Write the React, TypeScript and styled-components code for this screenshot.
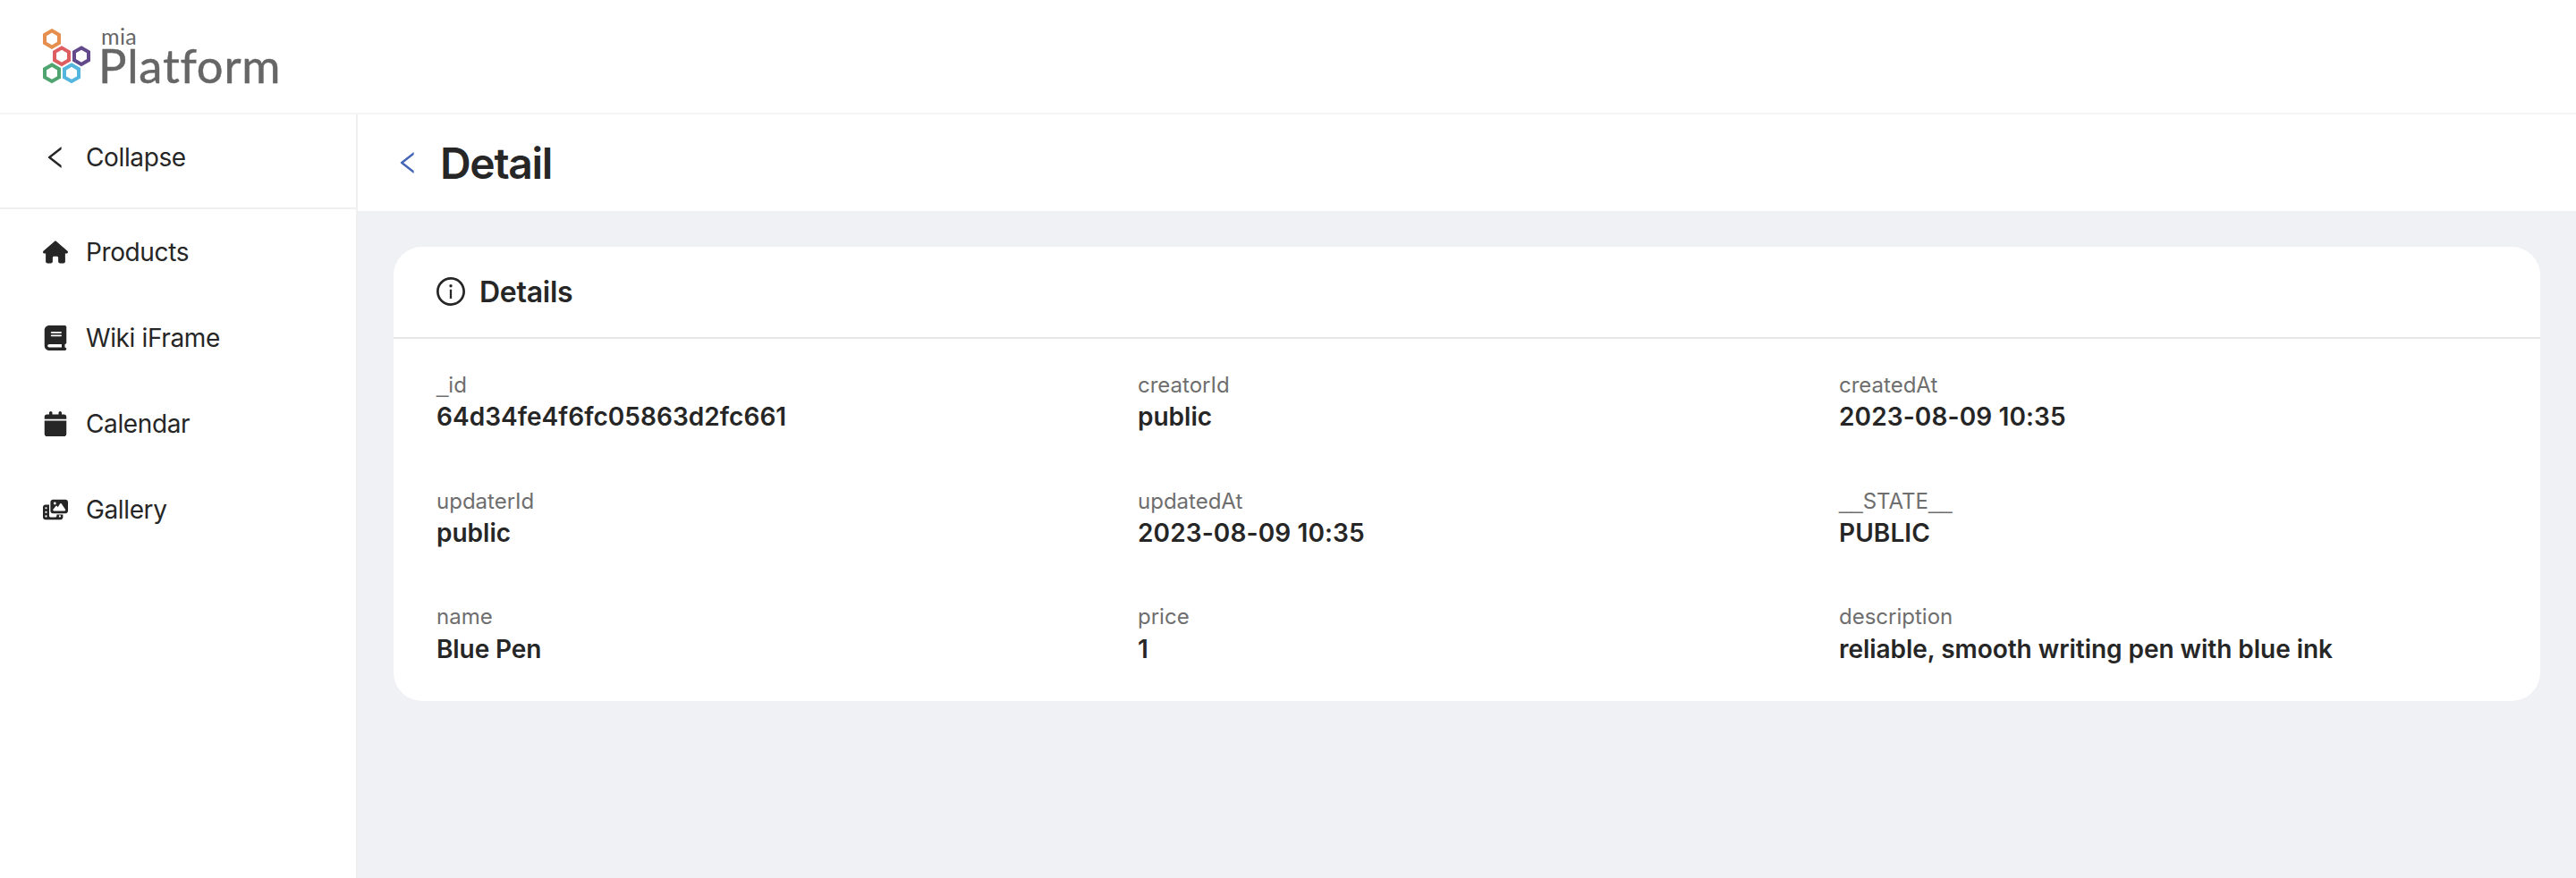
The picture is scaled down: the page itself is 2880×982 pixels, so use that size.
import React from 'react';
import styled, { createGlobalStyle } from 'styled-components';
import { FaBook, FaCalendar, FaHouse, FaPhotoFilm } from 'react-icons/fa6';

const GlobalStyle = createGlobalStyle`
  *, *::before, *::after { box-sizing: border-box; }
  body {
    margin: 0;
    background: #f0f1f5;
    color: #262626;
    font-family: Inter, "Liberation Sans", sans-serif;
    font-size: 28px;
  }
`;

const Page = styled.div`
  display: flex;
  flex-direction: column;
  min-height: 100vh;
`;

const TopBar = styled.header`
  display: flex;
  align-items: center;
  height: 128px;
  padding: 0 48px;
  background: #fff;
  border-bottom: 2px solid #f4f4f4;
`;

const LogoLink = styled.a`
  display: flex;
  gap: 8px;
  height: 66px;
`;

const Wordmark = styled.div`
  display: flex;
  flex-direction: column;
  color: #666;
  font-family: Lato, sans-serif;
`;

const BrandPrefix = styled.span`
  padding-left: 3px;
  font-size: 25px;
  line-height: 20px;
  letter-spacing: 0.4px;
`;

const BrandName = styled.span`
  font-size: 52.5px;
  line-height: 46px;
  letter-spacing: 0.8px;
  -webkit-text-stroke: 0.5px #666;
`;

const Body = styled.div`
  display: flex;
  flex: 1;
`;

const Sidebar = styled.aside`
  width: 400px;
  flex: none;
  background: #fff;
  border-right: 2px solid #f0f0f0;
`;

const CollapseBar = styled.div`
  height: 106px;
  border-bottom: 2px solid #f0f0f0;
`;

const NavList = styled.nav`
  display: flex;
  flex-direction: column;
`;

const NavItem = styled.a`
  display: flex;
  align-items: center;
  gap: 20px;
  height: 96px;
  padding-left: 48px;
  letter-spacing: -0.38px;
  line-height: 44px;

  svg { flex: none; }
`;

const Content = styled.main`
  flex: 1;
  min-width: 0;
`;

const TitleBar = styled.div`
  display: flex;
  align-items: center;
  gap: 22px;
  height: 108px;
  padding-left: 42px;
  background: #fff;
  color: #4566b5;
`;

const Title = styled.h1`
  margin: 0;
  padding-top: 2px;
  color: #262626;
  font-size: 48px;
  font-weight: 600;
  line-height: 60px;
  letter-spacing: -1.33px;
`;

const Card = styled.section`
  margin: 40px;
  background: #fff;
  border-radius: 32px;
`;

const CardHeader = styled.div`
  display: flex;
  align-items: center;
  gap: 16px;
  height: 103px;
  padding: 0 48px 1px;
  border-bottom: 2px solid #e6e6e6;
`;

const CardTitle = styled.h2`
  margin: 0;
  padding-top: 2px;
  font-size: 32px;
  font-weight: 600;
  line-height: 44px;
  letter-spacing: -0.27px;
`;

const Fields = styled.dl`
  display: grid;
  grid-template-columns: repeat(3, 1fr);
  gap: 57.55px 48px;
  margin: 0;
  padding: 33.3px 48px 40.6px;
`;

const Field = styled.div`
  height: 72px;
`;

const Label = styled.dt`
  padding-top: 1px;
  color: #6e6e6e;
  font-size: 24px;
  line-height: 36px;
`;

const Underscores = styled.span`
  font-family: "Liberation Sans", sans-serif;
  line-height: 1;
`;

const Value = styled.dd<{ $tracking?: number }>`
  margin: 0.17px 0 0;
  font-weight: 600;
  line-height: 35px;
  letter-spacing: ${({ $tracking = 0 }) => $tracking}px;
`;

const hexagons = [
  { x: 10, y: 13.5, color: '#e68e4d' },
  { x: 21, y: 32.7, color: '#de5d61' },
  { x: 43, y: 32.7, color: '#61498b' },
  { x: 10, y: 51.8, color: '#4fa470' },
  { x: 32, y: 51.8, color: '#54b6de' },
];

const Logo = () => (
  <LogoLink>
    <svg width="54" height="66" viewBox="0 0 54 66">
      {hexagons.map(({ x, y, color }) => (
        <polygon
          key={color}
          points="0,-9.2 8,-4.6 8,4.6 0,9.2 -8,4.6 -8,-4.6"
          transform={`translate(${x} ${y})`}
          fill="none"
          stroke={color}
          strokeWidth="4"
        />
      ))}
    </svg>
    <Wordmark>
      <BrandPrefix>mia</BrandPrefix>
      <BrandName>Platform</BrandName>
    </Wordmark>
  </LogoLink>
);

const ChevronLeft = () => (
  <svg width="28" height="28" viewBox="64 64 896 896" fill="currentColor">
    <path d="M724 218.3V141c0-6.7-7.7-10.4-12.9-6.3L260.3 486.8a31.86 31.86 0 000 50.3l450.8 352.1c5.3 4.1 12.9.4 12.9-6.3v-77.3c0-4.9-2.3-9.6-6.1-12.6l-360-281 360-281.1c3.8-3 6.1-7.7 6.1-12.6z" />
  </svg>
);

const InfoCircle = () => (
  <svg width="32" height="32" viewBox="64 64 896 896" fill="currentColor">
    <path d="M512 64C264.6 64 64 264.6 64 512s200.6 448 448 448 448-200.6 448-448S759.4 64 512 64zm0 820c-205.4 0-372-166.6-372-372s166.6-372 372-372 372 166.6 372 372-166.6 372-372 372z" />
    <path d="M464 336a48 48 0 1096 0 48 48 0 10-96 0zm72 112h-48c-4.4 0-8 3.6-8 8v272c0 4.4 3.6 8 8 8h48c4.4 0 8-3.6 8-8V456c0-4.4-3.6-8-8-8z" />
  </svg>
);

const navItems = [
  { label: 'Products', Icon: FaHouse },
  { label: 'Wiki iFrame', Icon: FaBook },
  { label: 'Calendar', Icon: FaCalendar },
  { label: 'Gallery', Icon: FaPhotoFilm },
];

type FieldData = { label: string; value: string; tracking?: number };

const fields: FieldData[] = [
  { label: '_id', value: '64d34fe4f6fc05863d2fc661', tracking: 0.05 },
  { label: 'creatorId', value: 'public' },
  { label: 'createdAt', value: '2023-08-09 10:35', tracking: 0.13 },
  { label: 'updaterId', value: 'public' },
  { label: 'updatedAt', value: '2023-08-09 10:35', tracking: 0.13 },
  { label: '__STATE__', value: 'PUBLIC', tracking: 0.1 },
  { label: 'name', value: 'Blue Pen', tracking: -0.1 },
  { label: 'price', value: '1' },
  { label: 'description', value: 'reliable, smooth writing pen with blue ink', tracking: -0.04 },
];

const FieldLabel = ({ text }: { text: string }) => (
  <Label>
    {text
      .split(/(_+)/)
      .filter(Boolean)
      .map((part, i) => (part.startsWith('_') ? <Underscores key={i}>{part}</Underscores> : part))}
  </Label>
);

export default function App() {
  return (
    <Page>
      <GlobalStyle />
      <TopBar>
        <Logo />
      </TopBar>
      <Body>
        <Sidebar>
          <CollapseBar>
            <NavItem>
              <ChevronLeft />
              Collapse
            </NavItem>
          </CollapseBar>
          <NavList>
            {navItems.map(({ label, Icon }) => (
              <NavItem key={label}>
                <Icon size={28} />
                {label}
              </NavItem>
            ))}
          </NavList>
        </Sidebar>
        <Content>
          <TitleBar>
            <ChevronLeft />
            <Title>Detail</Title>
          </TitleBar>
          <Card>
            <CardHeader>
              <InfoCircle />
              <CardTitle>Details</CardTitle>
            </CardHeader>
            <Fields>
              {fields.map(({ label, value, tracking }) => (
                <Field key={label}>
                  <FieldLabel text={label} />
                  <Value $tracking={tracking}>{value}</Value>
                </Field>
              ))}
            </Fields>
          </Card>
        </Content>
      </Body>
    </Page>
  );
}
